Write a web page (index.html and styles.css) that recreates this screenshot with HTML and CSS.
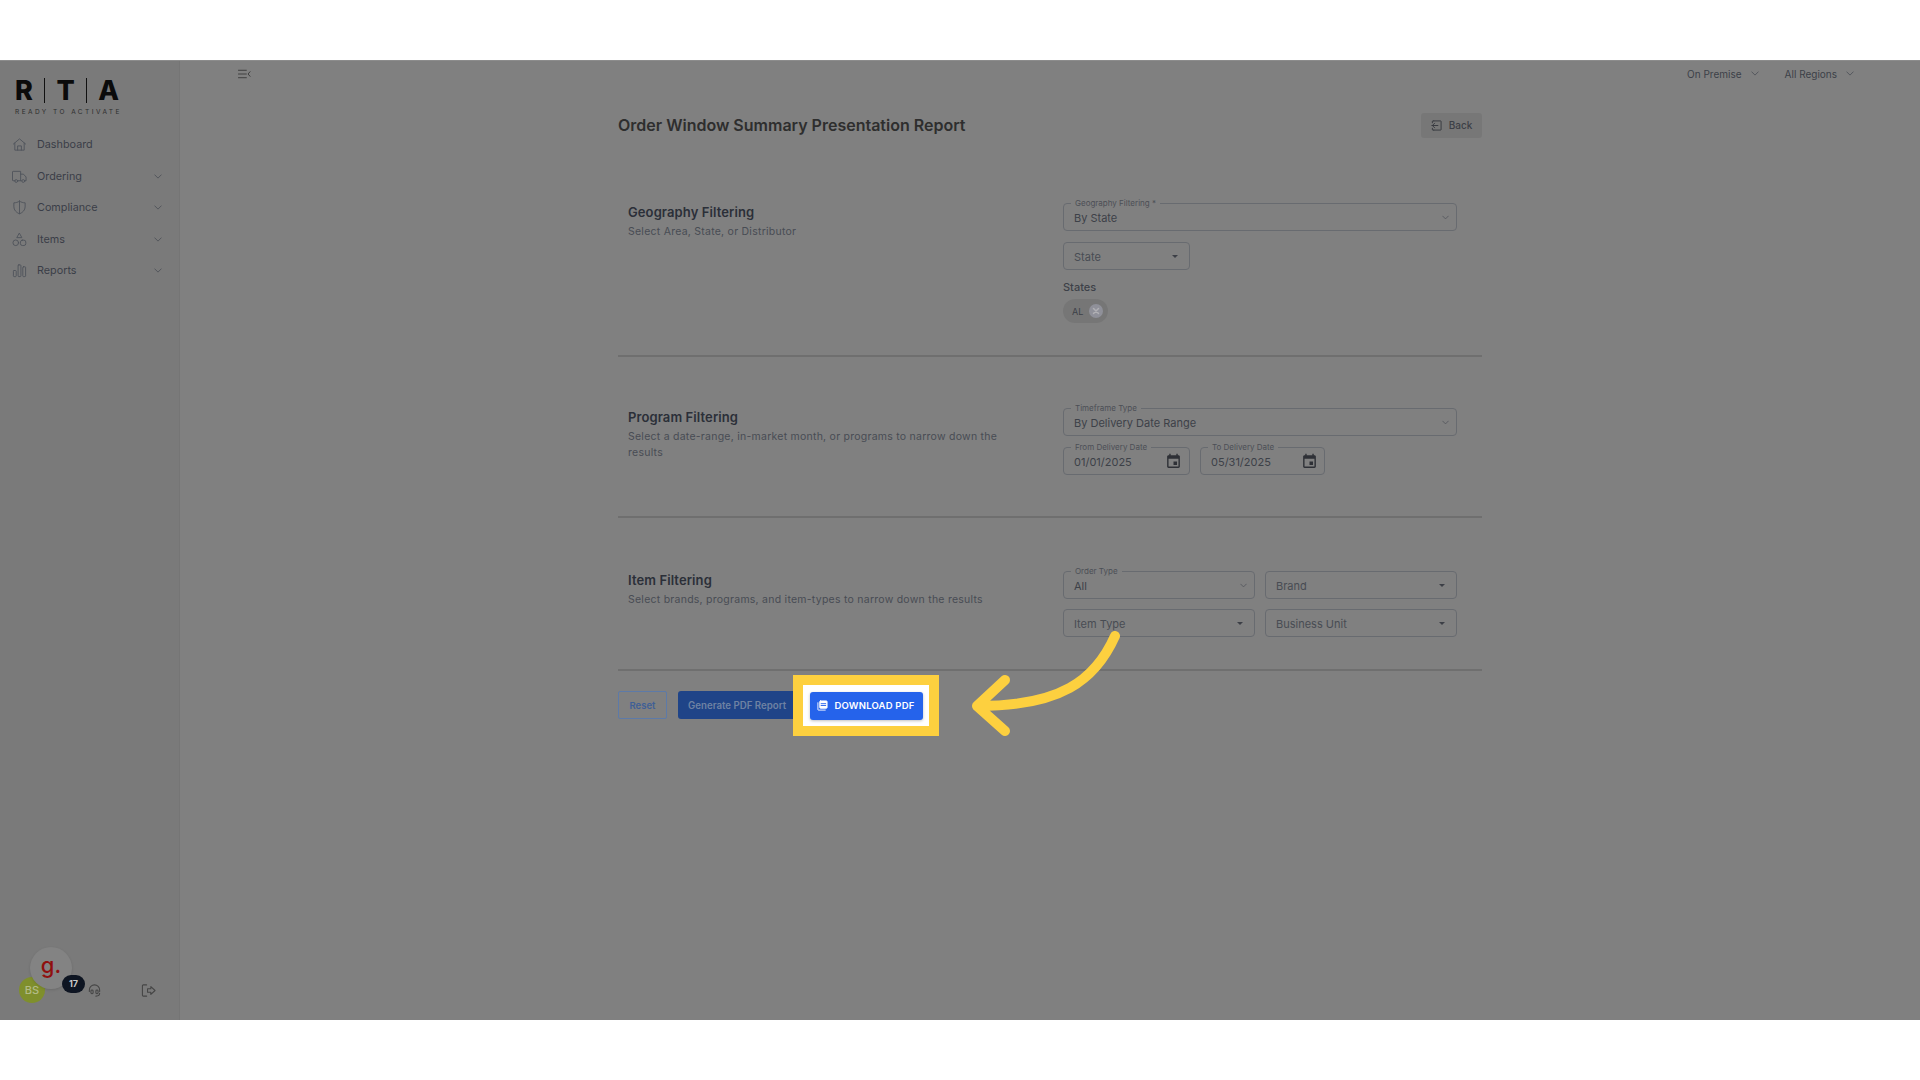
FILE: index.html
```html
<!DOCTYPE html>
<html lang="en">
<head>
<meta charset="utf-8">
<title>Order Window Summary Presentation Report</title>
<link rel="stylesheet" href="styles.css">
</head>
<body>
<div class="band"></div>
<div class="app">
  <aside class="sidebar">
    <div class="logo">
      <div class="logo-mark"><span>R</span><i></i><span>T</span><i></i><span>A</span></div>
      <div class="logo-tag">READY TO ACTIVATE</div>
    </div>
    <nav class="nav">
      <a class="nav-item"><svg class="nav-icon" viewBox="0 0 16 16"><path d="M1.5 7.5 8 2l6.5 5.5M3 6.5V14h10V6.5M6 14V9.5h4V14"/></svg><span>Dashboard</span></a>
      <a class="nav-item"><svg class="nav-icon" viewBox="0 0 16 16"><path d="M3 12.5H1.2a.7.7 0 0 1-.7-.7V3.2a.7.7 0 0 1 .7-.7h8v10H6M9.2 5.5h3l2.8 3v4h-1.2M9.2 12.5H10"/><circle cx="4.5" cy="12.8" r="1.5"/><circle cx="12" cy="12.8" r="1.5"/></svg><span>Ordering</span><svg class="chev" viewBox="0 0 10 6"><path d="M1 1l4 4 4-4"/></svg></a>
      <a class="nav-item"><svg class="nav-icon" viewBox="0 0 16 16"><path d="M8 1.2c2 1.3 3.8 1.8 6 1.8v4.3c0 3.3-2.4 6-6 7.5-3.6-1.5-6-4.2-6-7.5V3c2.2 0 4-.5 6-1.8zM8 1.5v13"/></svg><span>Compliance</span><svg class="chev" viewBox="0 0 10 6"><path d="M1 1l4 4 4-4"/></svg></a>
      <a class="nav-item"><svg class="nav-icon" viewBox="0 0 16 16"><path d="M8 1.5 10.5 6h-5z"/><circle cx="4" cy="11.5" r="3"/><rect x="9" y="8.7" width="5.7" height="5.7" rx="2"/></svg><span>Items</span><svg class="chev" viewBox="0 0 10 6"><path d="M1 1l4 4 4-4"/></svg></a>
      <a class="nav-item"><svg class="nav-icon" viewBox="0 0 16 16"><rect x="1.5" y="8" width="3" height="6.5" rx=".8"/><rect x="6.5" y="2" width="3" height="12.5" rx=".8"/><rect x="11.5" y="4" width="3" height="10.5" rx=".8"/></svg><span>Reports</span><svg class="chev" viewBox="0 0 10 6"><path d="M1 1l4 4 4-4"/></svg></a>
    </nav>
    <div class="side-foot">
      <span class="avatar">BS</span>
      <svg class="foot-icon headset" viewBox="0 0 16 16"><path d="M2.5 9V7.5a5.5 5.5 0 0 1 11 0V9M13.5 11c0 2-1.5 3-4 3"/><rect x="4.2" y="7.5" width="2.3" height="4" rx="1"/><rect x="9.5" y="7.5" width="2.3" height="4" rx="1"/></svg>
      <svg class="foot-icon logout" viewBox="0 0 16 16"><path d="M6 2H2.5a1 1 0 0 0-1 1v10a1 1 0 0 0 1 1H6M7 6.2h3.5V3.800L15 8l-4.500 4.200V9.800H7z"/></svg>
      <span class="g-bubble">g.</span>
      <span class="g-badge">17</span>
    </div>
  </aside>
  <main class="main">
    <header class="topbar">
      <svg class="collapse" viewBox="0 0 14 10"><path d="M.5 1h8.500M.5 5h8.500M.5 9h8.500M13 2.500 10.800 5 13 7.500"/></svg>
      <div class="top-menus">
        <span class="top-menu">On Premise<svg class="chev" viewBox="0 0 10 6"><path d="M1 1l4 4 4-4"/></svg></span>
        <span class="top-menu">All Regions<svg class="chev" viewBox="0 0 10 6"><path d="M1 1l4 4 4-4"/></svg></span>
      </div>
    </header>
    <div class="content">
      <div class="title-row">
        <h1>Order Window Summary Presentation Report</h1>
        <button class="back"><svg viewBox="0 0 12 12"><path d="M3 1h7.500a.5.5 0 0 1 .5.5v9a.5.5 0 0 1-.5.5H3M1.500 3V1.500A.5.5 0 0 1 2 1h1M1.500 9v1.500a.5.5 0 0 0 .5.5h1M1 6h6.500M4 3.500 1.500 6 4 8.500" /></svg>Back</button>
      </div>

      <section class="section sec-geo">
        <div class="sec-text">
          <h2>Geography Filtering</h2>
          <p>Select Area, State, or Distributor</p>
        </div>
        <div class="sec-fields">
          <div class="field"><label>Geography Filtering *</label><span>By State</span><svg class="chev" viewBox="0 0 10 6"><path d="M1 1l4 4 4-4"/></svg></div>
          <div class="field narrow placeholder"><span>State</span><b class="caret"></b></div>
          <div class="states-label">States</div>
          <div class="chip">AL<span class="chip-x"><svg viewBox="0 0 10 10"><path d="M2.500 2.500l5 5M7.500 2.500l-5 5"/></svg></span></div>
        </div>
      </section>

      <section class="section sec-prog">
        <div class="sec-text">
          <h2>Program Filtering</h2>
          <p>Select a date-range, in-market month, or programs to narrow down the results</p>
        </div>
        <div class="sec-fields">
          <div class="field"><label>Timeframe Type</label><span>By Delivery Date Range</span><svg class="chev" viewBox="0 0 10 6"><path d="M1 1l4 4 4-4"/></svg></div>
          <div class="date-row">
            <div class="field date-from"><label>From Delivery Date</label><span>01/01/2025</span><svg class="cal" viewBox="0 0 24 24"><path d="M17 12h-5v5h5v-5zM16 1v2H8V1H6v2H5c-1.100 0-2 .9-2 2v14c0 1.100.9 2 2 2h14c1.100 0 2-.9 2-2V5c0-1.100-.9-2-2-2h-1V1h-2zm3 18H5V8h14v11z"/></svg></div>
            <div class="field date-to"><label>To Delivery Date</label><span>05/31/2025</span><svg class="cal" viewBox="0 0 24 24"><path d="M17 12h-5v5h5v-5zM16 1v2H8V1H6v2H5c-1.100 0-2 .9-2 2v14c0 1.100.9 2 2 2h14c1.100 0 2-.9 2-2V5c0-1.100-.9-2-2-2h-1V1h-2zm3 18H5V8h14v11z"/></svg></div>
          </div>
        </div>
      </section>

      <section class="section sec-item">
        <div class="sec-text">
          <h2>Item Filtering</h2>
          <p>Select brands, programs, and item-types to narrow down the results</p>
        </div>
        <div class="sec-fields grid-fields">
          <div class="field"><label>Order Type</label><span>All</span><svg class="chev" viewBox="0 0 10 6"><path d="M1 1l4 4 4-4"/></svg></div>
          <div class="field placeholder"><span>Brand</span><b class="caret"></b></div>
          <div class="field placeholder"><span>Item Type</span><b class="caret"></b></div>
          <div class="field placeholder"><span>Business Unit</span><b class="caret"></b></div>
        </div>
      </section>

      <div class="actions">
        <button class="btn-reset">Reset</button>
        <button class="btn-generate">Generate PDF Report</button>
      </div>
    </div>
  </main>
  <div class="highlight">
    <button class="btn-download"><svg viewBox="0 0 12 12"><path class="dl-back" d="M1 3v7.500a.5.5 0 0 0 .5.5H9"/><rect x="3" y="1" width="8" height="8" rx=".8"/><path class="dl-line" d="M4.500 4h5M4.500 6h5"/></svg>DOWNLOAD PDF</button>
  </div>
  <svg class="arrow" viewBox="0 0 170 120"><path d="M155 5C135 50 100 75 18 75M45 49 17 75l28 25"/></svg>
</div>
<div class="band"></div>
</body>
</html>
```

FILE: styles.css
```css
* { box-sizing: border-box; }
html, body { margin: 0; height: 100%; }
body {
  background: #fff;
  font-family: "Inter", "Liberation Sans", sans-serif;
  color: #30343c;
  display: flex;
  flex-direction: column;
  overflow: hidden;
}
.band { height: 60px; flex: none; background: #fff; }
.app {
  position: relative;
  height: 960px;
  flex: none;
  display: flex;
  background: #808080;
  border-top: 1px solid #8c8c8c;
}
svg { display: block; fill: none; stroke-linecap: round; stroke-linejoin: round; }
button { font-family: inherit; cursor: pointer; }

/* sidebar */
.sidebar {
  width: 180px;
  flex: none;
  background: #7a7a7a;
  border-right: 1px solid #757575;
  display: flex;
  flex-direction: column;
  padding: 17px 0 0;
}
.logo { margin-left: 15px; width: 104px; }
.logo-mark {
  display: flex;
  align-items: center;
  justify-content: space-between;
  height: 25px;
  font-family: "Inter", sans-serif;
  font-weight: 800;
  font-size: 27px;
  line-height: 25px;
  color: #0b0b0b;
}
.logo-mark i { width: 1px; height: 25px; background: #111; }
.logo-tag {
  margin-top: 5px;
  font-size: 6.500px;
  line-height: 8px;
  letter-spacing: 2.450px;
  white-space: nowrap;
  color: #2e2e2e;
}
.nav { margin-top: 13px; display: flex; flex-direction: column; }
.nav-item {
  height: 31.500px;
  display: flex;
  align-items: center;
  padding: 0 17px 0 12px;
  font-size: 10.800px;
  color: #3a3e48;
}
.nav-item span { flex: 1; margin-left: 10px; }
.nav-icon { width: 15px; height: 15px; stroke: #50545c; stroke-width: 1; }
.nav-item .chev { width: 8px; height: 5px; }
.chev { stroke: #4a4e56; stroke-width: 1; flex: none; }

.side-foot {
  position: relative;
  margin-top: auto;
  height: 70px;
  display: flex;
  align-items: flex-end;
  padding-bottom: 17px;
}
.avatar {
  width: 26px;
  height: 26px;
  margin-left: 19px;
  border-radius: 50%;
  background: #7f8f2c;
  color: #b3bb86;
  font-size: 11px;
  font-weight: 500;
  display: flex;
  align-items: center;
  justify-content: center;
}
.foot-icon { stroke: #444; stroke-width: 1.100; width: 15px; height: 15px; }
.headset { margin: 0 0 5px 42px; }
.logout { margin: 0 0 5px 39px; }
.g-bubble {
  position: absolute;
  left: 30px;
  top: -3px;
  width: 42px;
  height: 42px;
  border-radius: 50%;
  background: #838383;
  box-shadow: 0 1px 3px rgba(0,0,0,.12);
  color: #8f0f0f;
  font-size: 22px;
  line-height: 36px;
  font-weight: 500;
  text-align: center;
}
.g-badge {
  position: absolute;
  left: 62px;
  top: 25px;
  width: 23px;
  height: 18px;
  border-radius: 9px;
  background: #0e1522;
  color: #c9c9c9;
  font-size: 9px;
  font-weight: 700;
  line-height: 18px;
  text-align: center;
}

/* main */
.main { flex: 1; display: flex; flex-direction: column; min-width: 0; }
.topbar {
  height: 25px;
  display: flex;
  align-items: center;
  justify-content: space-between;
  padding: 0 66px 0 58px;
}
.collapse { width: 13px; height: 10px; stroke: #3a3a3a; stroke-width: 1; }
.top-menus { display: flex; gap: 26px; }
.top-menu {
  display: flex;
  align-items: center;
  gap: 9px;
  font-size: 10px;
  color: #3c4048;
}
.top-menu .chev { width: 8px; height: 5px; }

.content { width: 864px; margin-left: 438px; }
.title-row {
  margin-top: 27px;
  height: 24px;
  display: flex;
  align-items: center;
  justify-content: space-between;
}
h1 { margin: 0; font-size: 16px; font-weight: 600; color: #2e2e2e; }
.back {
  width: 61px;
  height: 25px;
  border: 0;
  border-radius: 3px;
  background: #777;
  color: #3c3f46;
  font-size: 10px;
  font-weight: 500;
  display: flex;
  align-items: center;
  justify-content: center;
  gap: 7px;
}
.back svg { width: 11px; height: 11px; stroke: #34373d; stroke-width: 1; }

.section {
  display: flex;
  border-bottom: 2px solid #6f6f6f;
}
.sec-geo { padding-top: 66px; padding-bottom: 32px; }
.sec-prog { padding-top: 51px; padding-bottom: 41px; }
.sec-item { padding-top: 53px; padding-bottom: 32px; }
.sec-text { width: 445px; padding: 0 40px 0 10px; flex: none; }
h2 { margin: 0 0 3px; font-size: 13px; line-height: 18px; font-weight: 600; letter-spacing: .1px; color: #2b2f38; }
.sec-text p { margin: 0; font-size: 10.500px; line-height: 16px; letter-spacing: .25px; color: #484c54; }
.sec-fields { width: 394px; flex: none; display: flex; flex-direction: column; }

.field {
  position: relative;
  height: 28px;
  border: 1px solid #686b70;
  border-radius: 4px;
  padding: 0 10px;
  display: flex;
  align-items: center;
  justify-content: space-between;
  font-size: 11px;
  color: #3d4148;
}
.field > span { margin-top: 1px; }
.field > .chev { width: 7px; height: 5px; margin-right: -3px; }
.field label {
  position: absolute;
  left: 7px;
  top: -5px;
  padding: 0 4px;
  background: #808080;
  font-size: 8px;
  line-height: 9px;
  color: #4c4f56;
  white-space: nowrap;
}
.placeholder { color: #484c53; }
.caret {
  width: 0;
  height: 0;
  margin-right: 1px;
  border-left: 3.500px solid transparent;
  border-right: 3.500px solid transparent;
  border-top: 3.500px solid #3c3f46;
}
.narrow { width: 127px; margin-top: 11px; }
.states-label { margin-top: 10px; font-size: 11px; line-height: 14px; font-weight: 500; color: #3d4148; }
.chip {
  margin-top: 5px;
  width: 45px;
  height: 24px;
  border-radius: 12px;
  background: #767676;
  padding: 0 5px 0 9px;
  display: flex;
  align-items: center;
  justify-content: space-between;
  font-size: 9px;
  color: #3d4148;
}
.chip-x { width: 14px; height: 14px; border-radius: 50%; background: #8f9099; display: flex; align-items: center; justify-content: center; }
.chip-x svg { width: 10px; height: 10px; stroke: #b0b0b4; stroke-width: 1.500; }

.date-row { display: flex; gap: 10px; margin-top: 11px; }
.date-from { width: 127px; }
.date-to { width: 125px; }
.cal { width: 17px; height: 17px; fill: #2e3036; stroke: none; margin-right: -3px; }
.date-to .cal { margin-right: -4px; }
.grid-fields { display: grid; grid-template-columns: 1fr 1fr; gap: 10px; }

.actions { display: flex; gap: 11px; margin-top: 20px; }
.btn-reset {
  width: 49px;
  height: 28px;
  border: 1px solid #5d7aa8;
  border-radius: 2px;
  background: #808080;
  color: #3f5f96;
  font-size: 9.500px;
  font-weight: 600;
}
.btn-generate {
  width: 122px;
  height: 28px;
  border: 0;
  border-radius: 3px;
  background: #1f4488;
  color: #6e82a3;
  font-size: 9.700px;
  font-weight: 600;
  text-align: left;
  padding-left: 10px;
  white-space: nowrap;
}

/* tutorial highlight */
.highlight {
  position: absolute;
  left: 793px;
  top: 614px;
  width: 146px;
  height: 61px;
  border: 10px solid #fdd03f;
  background: #fff;
  display: flex;
  align-items: center;
  justify-content: center;
}
.btn-download {
  width: 113px;
  height: 28px;
  border: 0;
  border-radius: 3px;
  background: #2563eb;
  color: #fff;
  font-size: 9.500px;
  font-weight: 600;
  letter-spacing: .2px;
  display: flex;
  align-items: center;
  justify-content: center;
  gap: 6px;
  box-shadow: 0 1px 3px rgba(0,0,0,.25);
}
.btn-download svg { width: 11px; height: 11px; fill: #fff; stroke: #fff; stroke-width: 1; }
.btn-download .dl-back { fill: none; }
.btn-download .dl-line { stroke: #2563eb; }
.arrow {
  position: absolute;
  left: 960px;
  top: 570px;
  width: 170px;
  height: 120px;
  stroke: #fdd03f;
  stroke-width: 10;
}
```
